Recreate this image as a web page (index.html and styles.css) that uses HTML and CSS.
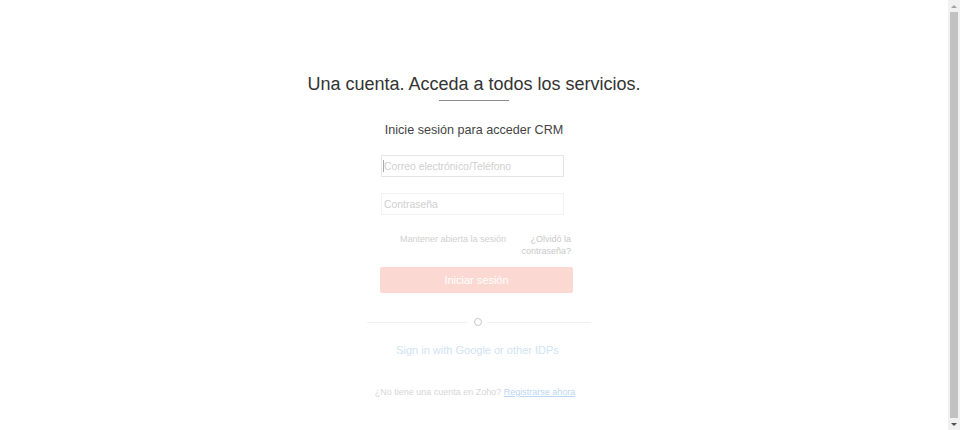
FILE: index.html
```html
<!DOCTYPE html>
<html lang="es">
<head>
<meta charset="utf-8">
<title>Zoho CRM</title>
<link rel="stylesheet" href="styles.css">
</head>
<body>
<main class="page">
  <h1 class="title">Una cuenta. Acceda a todos los servicios.</h1>
  <div class="title-rule"></div>
  <h2 class="subtitle">Inicie sesión para acceder CRM</h2>
  <form class="form">
    <div class="field"><span class="caret"></span><input class="input" type="text" placeholder="Correo electrónico/Teléfono"></div>
    <div class="field"><input class="input input-pass" type="password" placeholder="Contraseña"></div>
    <div class="options">
      <span class="keep">Mantener abierta la sesión</span>
      <a class="forgot">¿Olvidó la<br>contraseña?</a>
    </div>
    <button class="btn" type="button">Iniciar sesión</button>
  </form>
  <div class="divider"><span class="line"></span><span class="circle"></span><span class="line line-right"></span></div>
  <p class="idp">Sign in with Google or other IDPs</p>
  <p class="signup">¿No tiene una cuenta en Zoho? <a class="signup-link">Registrarse ahora</a></p>
</main>
<aside class="scrollbar" aria-hidden="true">
  <span class="sb-btn"><span class="sb-arrow-up"></span></span>
  <span class="sb-thumb"></span>
  <span class="sb-btn"><span class="sb-arrow-down"></span></span>
</aside>
</body>
</html>
```
FILE: styles.css
```css
html, body {
  margin: 0;
  padding: 0;
  background: #fff;
}
body {
  font-family: "Liberation Sans", Arial, sans-serif;
  display: flex;
  height: 430px;
  overflow: hidden;
}
.page {
  flex: 1;
  display: flex;
  flex-direction: column;
  align-items: center;
  padding-top: 72px;
  box-sizing: border-box;
}
.title {
  margin: 0;
  font-size: 18px;
  font-weight: normal;
  color: #333;
  line-height: 24px;
}
.title-rule {
  width: 70px;
  height: 1px;
  background: #8a8a8a;
  margin-top: 4px;
}
.subtitle {
  margin: 20px 0 0;
  font-size: 12.6px;
  font-weight: normal;
  color: #444;
  line-height: 18px;
}
.form {
  display: flex;
  flex-direction: column;
  align-items: flex-start;
  width: 193px;
  margin-top: 16px;
  margin-left: 5px;
}
.field {
  position: relative;
  width: 183px;
  margin-bottom: 16px;
  margin-left: 1px;
}
.input {
  display: block;
  width: 183px;
  height: 22px;
  box-sizing: border-box;
  border: 1px solid #e6e6e6;
  padding: 0 2px;
  font-family: "Liberation Sans", Arial, sans-serif;
  font-size: 10.4px;
  color: #333;
  outline: none;
  background: #fff;
}
.input-pass {
  border-color: #f2f2f2;
}
.input::placeholder {
  color: #cfcfcf;
}
.caret {
  position: absolute;
  left: 2px;
  top: 5px;
  width: 1px;
  height: 12px;
  background: #aaa;
}
.options {
  display: flex;
  justify-content: space-between;
  align-items: flex-start;
  width: 171px;
  margin-left: 20px;
  margin-top: 2px;
  font-size: 9px;
  line-height: 12px;
  color: #cfcfcf;
}
.forgot {
  text-align: right;
  color: #c8c8c8;
}
.btn {
  margin-top: 10px;
  width: 193px;
  height: 26px;
  border: none;
  border-radius: 2px;
  background: #fbd9d2;
  color: #fff;
  font-family: "Liberation Sans", Arial, sans-serif;
  font-size: 11px;
  padding: 0;
}
.divider {
  display: flex;
  align-items: center;
  margin-top: 25px;
  margin-left: 10px;
}
.line {
  width: 100px;
  height: 1px;
  background: #f0f0f0;
}
.line-right {
  width: 104px;
}
.circle {
  width: 6px;
  height: 6px;
  border: 1px solid #c8c8c8;
  border-radius: 50%;
  margin: 0 5px 0 7px;
}
.idp {
  margin: 16px 0 0 7px;
  font-size: 11px;
  color: #cfe3f3;
  line-height: 16px;
}
.signup {
  margin: 28px 0 0 2px;
  font-size: 9px;
  color: #d6d6d6;
  line-height: 12px;
}
.signup-link {
  color: #b9d6f0;
  text-decoration: underline;
}
.scrollbar {
  width: 12px;
  height: 430px;
  background: #f1f1f1;
  display: flex;
  flex-direction: column;
  flex-shrink: 0;
}
.sb-btn {
  height: 12px;
  display: flex;
  align-items: center;
  justify-content: center;
  flex-shrink: 0;
}
.sb-arrow-up {
  width: 0;
  height: 0;
  border-left: 3px solid transparent;
  border-right: 3px solid transparent;
  border-bottom: 3px solid #a3a3a3;
}
.sb-arrow-down {
  width: 0;
  height: 0;
  border-left: 3px solid transparent;
  border-right: 3px solid transparent;
  border-top: 3px solid #505050;
}
.sb-thumb {
  flex: 1;
  margin: 0 2px 0 2px;
  background: #c1c1c1;
}
```
